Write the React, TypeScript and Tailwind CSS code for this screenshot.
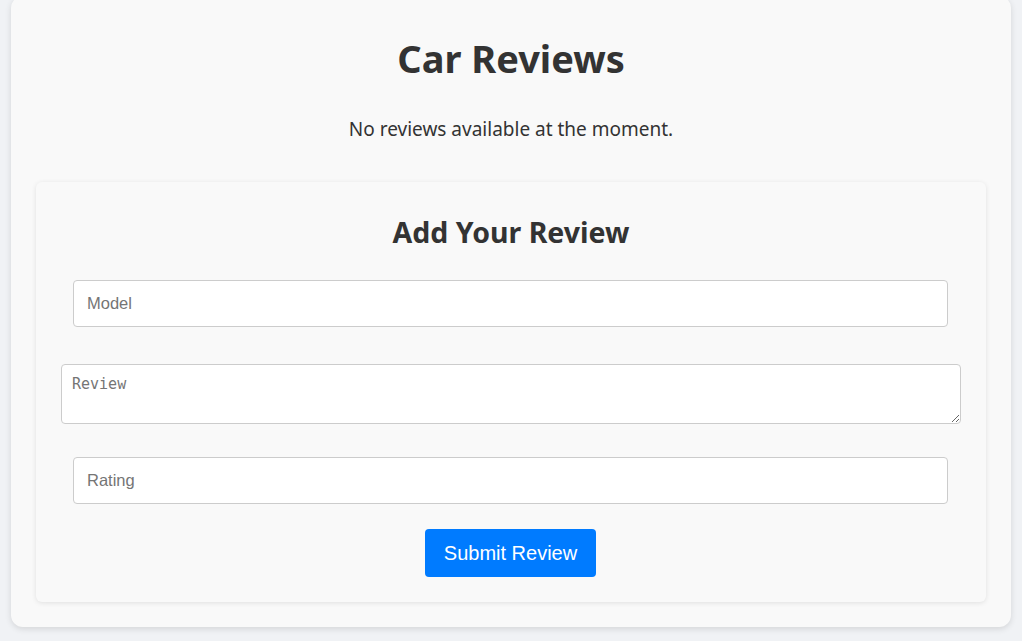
export default function App() {
  return (
    <div className="min-h-screen overflow-hidden bg-[#f0f2f5] px-[11px]">
      <div
        className="mx-auto -mt-[4px] h-[631px] w-[1000px] rounded-[12px] bg-[#f9f9f9] px-[25px] pt-[4px] shadow-[0_2px_6px_rgba(0,0,0,0.12)]"
        style={{ fontFamily: '"Noto Sans", sans-serif' }}
      >
        <h1 className="pt-[35px] text-center text-[38px] font-bold leading-[46px] text-[#333]">
          Car Reviews
        </h1>
        <p className="mt-[36px] text-center text-[19px] leading-[24px] text-[#333]">
          No reviews available at the moment.
        </p>
        <div className="mt-[41px] h-[420px] rounded-[6px] bg-[#f9f9f9] px-[25px] pt-[32px] shadow-[0_1px_5px_rgba(0,0,0,0.1)]">
          <h2 className="text-center text-[28.5px] font-bold leading-[36px] text-[#333]">
            Add Your Review
          </h2>
          <form className="mt-[30px] flex flex-col items-start" onSubmit={(e) => e.preventDefault()}>
            <input
              placeholder="Model"
              className="ml-[12px] h-[47px] w-[875px] rounded-[4px] border border-[#ccc] bg-white px-[13px] text-[16.5px] text-[#333] placeholder:text-[#757575] outline-none"
              style={{ fontFamily: '"Liberation Sans", Arial, sans-serif' }}
            />
            <textarea
              placeholder="Review"
              className="mt-[37px] h-[60px] w-[900px] rounded-[4px] border border-[#ccc] bg-white px-[10px] py-[8px] text-[15px] text-[#333] placeholder:text-[#757575] outline-none"
              style={{ fontFamily: '"DejaVu Sans Mono", monospace' }}
            />
            <input
              placeholder="Rating"
              className="ml-[12px] mt-[33px] h-[47px] w-[875px] rounded-[4px] border border-[#ccc] bg-white px-[13px] text-[16.5px] text-[#333] placeholder:text-[#757575] outline-none"
              style={{ fontFamily: '"Liberation Sans", Arial, sans-serif' }}
            />
            <button
              type="submit"
              className="ml-[364px] mt-[25px] h-[48px] w-[171px] rounded-[4px] bg-[#007bff] text-[20px] text-white"
              style={{ fontFamily: '"Liberation Sans", Arial, sans-serif' }}
            >
              Submit Review
            </button>
          </form>
        </div>
      </div>
    </div>
  );
}
